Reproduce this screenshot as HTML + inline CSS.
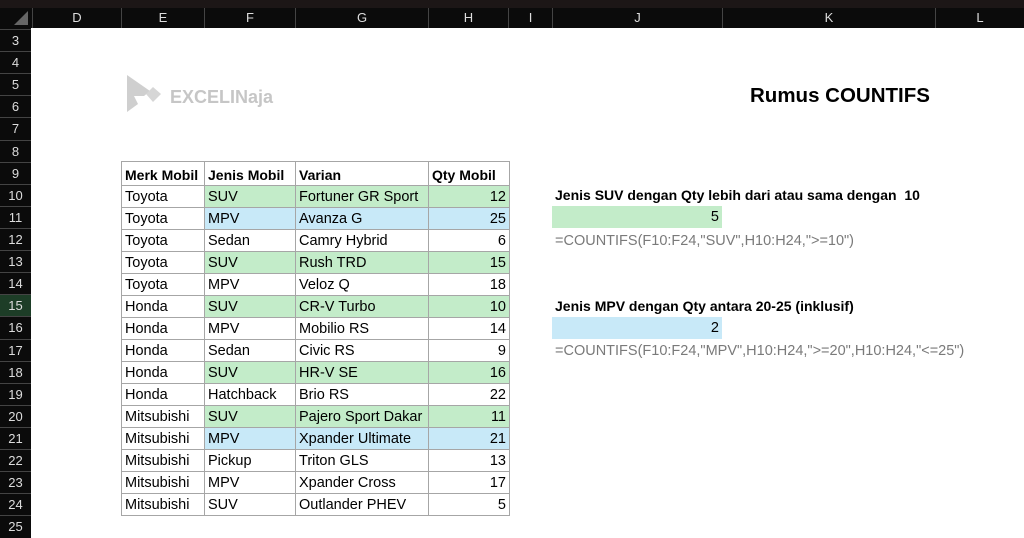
<!DOCTYPE html>
<html><head><style>
body{margin:0;width:1024px;height:538px;overflow:hidden;background:#fff;font-family:"Liberation Sans",sans-serif;position:relative}
.a{position:absolute}
#top{left:0;top:0;width:1024px;height:8px;background:#1c1616}
#colh{left:0;top:8px;width:1024px;height:20px;background:#0b0b0b}
#rowh{left:0;top:28px;width:31px;height:510px;background:#0b0b0b}
.ch{position:absolute;top:8px;height:20px;line-height:20px;color:#ddd;font-size:13px;text-align:center;border-left:1px solid #444;box-sizing:border-box}
.rh{position:absolute;left:0;width:31px;height:22px;line-height:22px;color:#ddd;font-size:13px;text-align:center;border-top:1px solid #444;box-sizing:border-box}
table{position:absolute;left:121px;top:161px;border-collapse:collapse;font-size:14.5px;table-layout:fixed;width:388px}
td{border:1px solid #a6a6a6;height:21px;padding:2px 3px 0 3px;box-sizing:border-box;white-space:nowrap;overflow:hidden;line-height:19px}
tr{height:22px}
td.n{text-align:right}
.g{background:#c3ecc9}.b{background:#c8e9f8}
th{border:1px solid #a6a6a6;height:21px;padding:2px 3px 0;text-align:left;font-size:14px;white-space:nowrap;overflow:hidden}
</style></head><body>
<div id="top" class="a"></div><div id="colh" class="a"></div><div id="rowh" class="a"></div>
<div class="a" style="left:14px;top:11px;width:0;height:0;border-left:14px solid transparent;border-bottom:14px solid #666"></div>
<div class="ch" style="left:32px;width:89px">D</div>
<div class="ch" style="left:121px;width:83px">E</div>
<div class="ch" style="left:204px;width:91px">F</div>
<div class="ch" style="left:295px;width:133px">G</div>
<div class="ch" style="left:428px;width:80px">H</div>
<div class="ch" style="left:508px;width:44px">I</div>
<div class="ch" style="left:552px;width:170px">J</div>
<div class="ch" style="left:722px;width:213px">K</div>
<div class="ch" style="left:935px;width:89px">L</div>
<div class="rh" style="top:29px">3</div><div class="rh" style="top:51px">4</div><div class="rh" style="top:73px">5</div><div class="rh" style="top:95px">6</div><div class="rh" style="top:117px">7</div><div class="rh" style="top:140px">8</div><div class="rh" style="top:162px">9</div><div class="rh" style="top:184px">10</div><div class="rh" style="top:206px">11</div><div class="rh" style="top:228px">12</div><div class="rh" style="top:250px">13</div><div class="rh" style="top:272px">14</div><div class="rh" style="top:294px;background:#1d3d27">15</div><div class="rh" style="top:316px">16</div><div class="rh" style="top:339px">17</div><div class="rh" style="top:361px">18</div><div class="rh" style="top:383px">19</div><div class="rh" style="top:405px">20</div><div class="rh" style="top:427px">21</div><div class="rh" style="top:449px">22</div><div class="rh" style="top:471px">23</div><div class="rh" style="top:493px">24</div><div class="rh" style="top:515px">25</div>
<svg class="a" style="left:124px;top:74px" width="40" height="40" viewBox="0 0 40 40"><path d="M3 1 L3 38 L14 30 L10 22 L20 22 L26 17 Z" fill="#cfcfcf"/><path d="M22 20 L29 13 L37 20 L29 28 Z" fill="#d6d6d6"/></svg>
<div class="a" style="left:170px;top:87px;font-size:18px;font-weight:bold;color:#c6c6c6">EXCELINaja</div>
<div class="a" style="left:750px;top:84px;font-size:20.5px;font-weight:bold;color:#000">Rumus COUNTIFS</div>
<table>
<colgroup><col style="width:83px"><col style="width:91px"><col style="width:133px"><col style="width:81px"></colgroup>
<tr><th>Merk Mobil</th><th>Jenis Mobil</th><th>Varian</th><th>Qty Mobil</th></tr>
<tr><td>Toyota</td><td class="g">SUV</td><td class="g">Fortuner GR Sport</td><td class="n g">12</td></tr>
<tr><td>Toyota</td><td class="b">MPV</td><td class="b">Avanza G</td><td class="n b">25</td></tr>
<tr><td>Toyota</td><td>Sedan</td><td>Camry Hybrid</td><td class="n">6</td></tr>
<tr><td>Toyota</td><td class="g">SUV</td><td class="g">Rush TRD</td><td class="n g">15</td></tr>
<tr><td>Toyota</td><td>MPV</td><td>Veloz Q</td><td class="n">18</td></tr>
<tr><td>Honda</td><td class="g">SUV</td><td class="g">CR-V Turbo</td><td class="n g">10</td></tr>
<tr><td>Honda</td><td>MPV</td><td>Mobilio RS</td><td class="n">14</td></tr>
<tr><td>Honda</td><td>Sedan</td><td>Civic RS</td><td class="n">9</td></tr>
<tr><td>Honda</td><td class="g">SUV</td><td class="g">HR-V SE</td><td class="n g">16</td></tr>
<tr><td>Honda</td><td>Hatchback</td><td>Brio RS</td><td class="n">22</td></tr>
<tr><td>Mitsubishi</td><td class="g">SUV</td><td class="g">Pajero Sport Dakar</td><td class="n g">11</td></tr>
<tr><td>Mitsubishi</td><td class="b">MPV</td><td class="b">Xpander Ultimate</td><td class="n b">21</td></tr>
<tr><td>Mitsubishi</td><td>Pickup</td><td>Triton GLS</td><td class="n">13</td></tr>
<tr><td>Mitsubishi</td><td>MPV</td><td>Xpander Cross</td><td class="n">17</td></tr>
<tr><td>Mitsubishi</td><td>SUV</td><td>Outlander PHEV</td><td class="n">5</td></tr>
</table>
<div class="a" style="left:555px;top:187px;font-size:14px;font-weight:bold">Jenis SUV dengan Qty lebih dari atau sama dengan &nbsp;10</div>
<div class="a g" style="left:552px;top:206px;width:167px;height:22px;line-height:22px;text-align:right;padding-right:3px;font-size:14.5px">5</div>
<div class="a" style="left:555px;top:233px;font-size:14.5px;color:#7a7a7a">=COUNTIFS(F10:F24,"SUV",H10:H24,"&gt;=10")</div>
<div class="a" style="left:555px;top:298px;font-size:14px;font-weight:bold">Jenis MPV dengan Qty antara 20-25 (inklusif)</div>
<div class="a b" style="left:552px;top:317px;width:167px;height:22px;line-height:22px;text-align:right;padding-right:3px;font-size:14.5px">2</div>
<div class="a" style="left:555px;top:343px;font-size:14.5px;color:#7a7a7a">=COUNTIFS(F10:F24,"MPV",H10:H24,"&gt;=20",H10:H24,"&lt;=25")</div>
</body></html>
